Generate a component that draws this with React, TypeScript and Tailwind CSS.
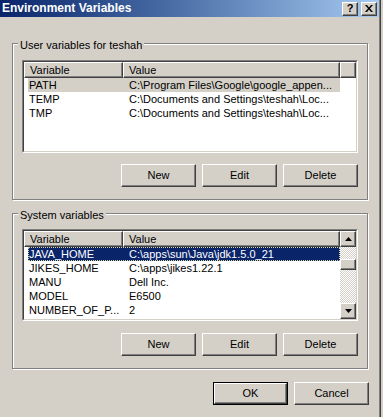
import { ReactNode } from "react";

const USER_VARS = [
  { name: "PATH", value: "C:\\Program Files\\Google\\google_appen..." },
  { name: "TEMP", value: "C:\\Documents and Settings\\teshah\\Loc..." },
  { name: "TMP", value: "C:\\Documents and Settings\\teshah\\Loc..." },
];

const SYSTEM_VARS = [
  { name: "JAVA_HOME", value: "C:\\apps\\sun\\Java\\jdk1.5.0_21" },
  { name: "JIKES_HOME", value: "C:\\apps\\jikes1.22.1" },
  { name: "MANU", value: "Dell Inc." },
  { name: "MODEL", value: "E6500" },
  { name: "NUMBER_OF_P...", value: "2" },
];

const raised =
  "border border-t-white border-l-white border-r-[#404040] border-b-[#404040] shadow-[inset_-1px_-1px_0_#808080] bg-[#d4d0c8]";

function WinButton({ label, isDefault }: { label: string; isDefault?: boolean }) {
  if (isDefault) {
    return (
      <div className="h-[23px] w-[75px] border border-black">
        <button className={`${raised} flex h-full w-full items-center justify-center text-[11px] text-black`}>
          {label}
        </button>
      </div>
    );
  }
  return (
    <button className={`${raised} flex h-[23px] w-[75px] items-center justify-center text-[11px] text-black`}>
      {label}
    </button>
  );
}

function GroupBox({ title, children }: { title: string; children: ReactNode }) {
  return (
    <div className="relative w-[356px] border border-[#808080] shadow-[inset_1px_1px_0_#fff,1px_1px_0_#fff] px-[9px]">
      <span className="absolute -top-[5px] left-[5px] bg-[#d4d0c8] px-[2px] text-[11px] leading-[13px] text-black">
        {title}
      </span>
      {children}
    </div>
  );
}

function Header({ filler }: { filler: boolean }) {
  return (
    <div className="flex h-[16px] shrink-0">
      <div className={`${raised} flex w-[99px] items-center pl-[5px] text-[11px]`}>Variable</div>
      <div className={`${raised} flex w-[217px] items-center pl-[5px] text-[11px]`}>Value</div>
      {filler && <div className={`${raised} flex-1`} />}
    </div>
  );
}

function Rows({
  rows,
  selected,
  focused,
}: {
  rows: { name: string; value: string }[];
  selected: number;
  focused: boolean;
}) {
  return (
    <div className="flex flex-col">
      {rows.map((row, i) => {
        const isSel = i === selected;
        let cls = "border-transparent text-black";
        if (isSel && focused) cls = "border-dotted border-[#d8d49a] bg-[#0a246a] text-white";
        else if (isSel) cls = "border-transparent bg-[#d4d0c8] text-black";
        return (
          <div
            key={row.name}
            className={`ml-[4px] flex h-[14px] w-[312px] shrink-0 items-center border text-[11px] leading-[12px] ${cls}`}
          >
            <div className="w-[93px] whitespace-nowrap">{row.name}</div>
            <div className="whitespace-nowrap pl-[7px]">{row.value}</div>
          </div>
        );
      })}
    </div>
  );
}

function Sunken({ className, children }: { className: string; children: ReactNode }) {
  return (
    <div className={`border border-t-[#808080] border-l-[#808080] border-r-white border-b-white ${className}`}>
      <div className="h-full overflow-hidden border border-t-[#404040] border-l-[#404040] border-r-[#d4d0c8] border-b-[#d4d0c8] bg-white">
        {children}
      </div>
    </div>
  );
}

function Arrow({ down }: { down?: boolean }) {
  return (
    <svg width="7" height="4" viewBox="0 0 7 4">
      {down ? <path d="M0 0h7L3.5 4z" fill="#000" /> : <path d="M0 4h7L3.5 0z" fill="#000" />}
    </svg>
  );
}

function ScrollBar() {
  return (
    <div className="flex w-[16px] shrink-0 flex-col">
      <div className={`${raised} flex h-[16px] shrink-0 items-center justify-center`}>
        <Arrow />
      </div>
      <div className="flex flex-1 flex-col bg-[conic-gradient(#fff_25%,#d4d0c8_0_50%,#fff_0_75%,#d4d0c8_0)] bg-[length:2px_2px]">
        <div className={`${raised} mt-[12px] h-[11px] shrink-0`} />
      </div>
      <div className={`${raised} flex h-[16px] shrink-0 items-center justify-center`}>
        <Arrow down />
      </div>
    </div>
  );
}

function ButtonRow() {
  return (
    <div className="flex justify-end gap-[6px]">
      <WinButton label="New" />
      <WinButton label="Edit" />
      <WinButton label="Delete" />
    </div>
  );
}

export default function App() {
  return (
    <div className="flex h-[417px] w-[383px] overflow-hidden bg-[#d4d0c8] font-['Liberation_Sans',Arial,sans-serif] text-black">
      <div className="flex h-full w-[381px] flex-col border-r border-r-[#404040] shadow-[inset_-1px_0_0_#808080]">
        {/* title bar */}
        <div className="mr-[1px] flex h-[17px] shrink-0 items-center bg-gradient-to-r from-[#0a246a] to-[#a6caf0] pl-[2px] pr-[2px]">
          <span className="flex-1 text-[12px] font-bold leading-[13px] text-white">Environment Variables</span>
          <div className={`${raised} flex h-[14px] w-[16px] items-center justify-center text-[11px] font-bold leading-none`}>?</div>
          <div className={`${raised} ml-[3px] flex h-[14px] w-[16px] items-center justify-center`}>
            <svg width="8" height="7" viewBox="0 0 8 7">
              <path d="M0 0h2l2 2.5L6 0h2L5 3.5 8 7H6L4 4.5 2 7H0l3-3.5z" fill="#000" />
            </svg>
          </div>
        </div>

        <div className="flex flex-col pl-[12px]">
          <div className="mt-[26px]">
            <GroupBox title="User variables for teshah">
              <div className="pt-[16px] pb-[12px]">
                <Sunken className="h-[93px]">
                  <Header filler />
                  <Rows rows={USER_VARS} selected={0} focused={false} />
                </Sunken>
                <div className="mt-[11px]">
                  <ButtonRow />
                </div>
              </div>
            </GroupBox>
          </div>

          <div className="mt-[13px]">
            <GroupBox title="System variables">
              <div className="pt-[15px] pb-[12px]">
                <Sunken className="h-[92px]">
                  <div className="flex h-full">
                    <div className="flex flex-1 flex-col overflow-hidden">
                      <Header filler={false} />
                      <Rows rows={SYSTEM_VARS} selected={0} focused />
                    </div>
                    <ScrollBar />
                  </div>
                </Sunken>
                <div className="mt-[12px]">
                  <ButtonRow />
                </div>
              </div>
            </GroupBox>
          </div>

          <div className="mt-[13px] flex w-[357px] justify-end gap-[6px]">
            <WinButton label="OK" isDefault />
            <WinButton label="Cancel" />
          </div>
        </div>
      </div>
    </div>
  );
}
